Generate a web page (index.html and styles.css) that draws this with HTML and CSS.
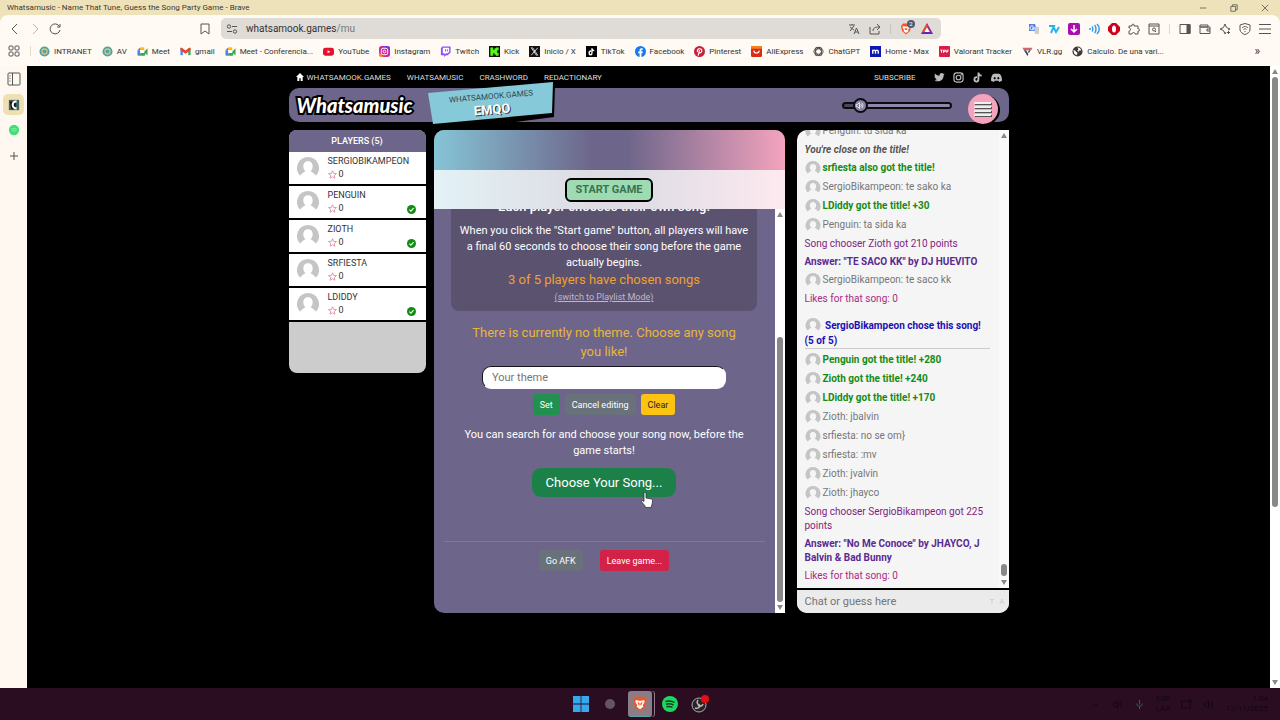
FILE: index.html
```html
<!DOCTYPE html>
<html lang="en">
<head>
    <meta charset="UTF-8">
    <meta name="viewport" content="width=device-width, initial-scale=1.0">
    <title>Whatsamusic - Name That Tune, Guess the Song Party Game</title>
    <link rel="stylesheet" href="styles.css">
</head>
<body>

    <!-- Shared icons -->
    <svg class="sprite" aria-hidden="true">
        <symbol id="avatar" viewBox="1 1 22 22">
            <path fill="#c5c5c5" d="M12 1a11 11 0 0 1 8 18.5l-1.500-1.200c-1-1.500-2.500-2.300-4-3 3-2 3.500-10-2.500-10s-5.500 8-2.500 10c-1.500.7-3 1.500-4 3L4 19.500A11 11 0 0 1 12 1z"/>
        </symbol>
        <symbol id="star" viewBox="0 0 24 24">
            <path fill="none" stroke="#d8799a" stroke-width="2" stroke-linejoin="round" d="M12 2l3 7 7.500.600-5.700 5 1.700 7.400-6.500-4-6.500 4 1.700-7.400-5.700-5L9 9z"/>
        </symbol>
        <symbol id="check" viewBox="0 0 24 24">
            <circle cx="12" cy="12" r="12" fill="#148c14"/>
            <path fill="none" stroke="#fff" stroke-width="3" d="M6.500 12.500l4 4 7-8"/>
        </symbol>
        <symbol id="globe" viewBox="0 0 24 24">
            <circle cx="12" cy="12" r="11" fill="#4fa3a8"/>
            <circle cx="12" cy="12" r="7" fill="#d5c27c"/>
            <circle cx="12" cy="12" r="4" fill="#4fa3a8"/>
        </symbol>
        <symbol id="meet" viewBox="0 0 24 24">
            <path fill="#fbbc04" d="M7 3h9v6H7z"/>
            <path fill="#ea4335" d="M7 3v6H1z"/>
            <path fill="#4285f4" d="M1 9h6v12H3c-1 0-2-1-2-2z"/>
            <path fill="#34a853" d="M7 15h9v-3l7-7v15l-5-4v3c0 1-1 2-2 2H7z"/>
            <path fill="#fff" d="M7 9h7v6H7z"/>
        </symbol>
        <symbol id="speaker" viewBox="0 0 24 24">
            <path fill="none" stroke="currentColor" stroke-width="2" d="M3 9v6h4l5 5V4L7 9zM15 8c2 2 2 6 0 8M18 5c4 4 4 10 0 14"/>
        </symbol>
    </svg>

    <!-- Browser window -->
    <header class="browser">
        <div class="title-bar">
            <span>Whatsamusic - Name That Tune, Guess the Song Party Game - Brave</span>
            <div class="window-buttons">
                <svg viewBox="0 0 10 10"><path d="M1 5h8"/></svg>
                <svg viewBox="0 0 10 10"><path d="M1 3h6v6H1zM3 3V1h6v6H7"/></svg>
                <svg viewBox="0 0 10 10"><path d="M1 1l8 8M9 1L1 9"/></svg>
            </div>
        </div>

        <div class="toolbar">
            <div class="nav-buttons">
                <svg viewBox="0 0 12 12"><path d="M8 1L3 6l5 5"/></svg>
                <svg class="faded" viewBox="0 0 12 12"><path d="M4 1l5 5-5 5"/></svg>
                <svg viewBox="0 0 12 12"><path d="M10.500 3.500A5 5 0 1 0 11 7M11 1v3H8"/></svg>
            </div>
            <svg class="bookmark-icon" viewBox="0 0 12 12"><path d="M2 1h8v10L6 8l-4 3z"/></svg>
            <div class="address-bar">
                <svg viewBox="0 0 12 12"><circle cx="3" cy="3.500" r="1.700"/><circle cx="9" cy="8.500" r="1.700"/><path d="M6 3.500h5M1 8.500h5"/></svg>
                <span class="url">whatsamook.games<span class="path">/mu</span></span>
                <div class="address-icons">
                    <svg viewBox="0 0 12 12"><path d="M1 2h6M4 1v1M2 8l4-5M2 4l4 3M6 11l2.500-6L11 11M7 9h3"/></svg>
                    <svg viewBox="0 0 12 12"><path d="M1 4v7h9V8M4 8c0-3 2-4 6-4M8 1l3 3-3 3"/></svg>
                    <span class="separator"></span>
                    <span class="shield">
                        <svg viewBox="0 0 24 24"><path fill="#f1562b" stroke="none" d="M6 1h12l4 5-2 10-8 7-8-7L2 6z"/><path fill="#fff" stroke="none" d="M6 6l4 1h4l4-1 1 3-3 5 1 2-5 4-5-4 1-2-3-5z"/><path fill="#f1562b" stroke="none" d="M9 10l3 1 3-1-1 4h-4z"/></svg>
                        <span class="badge">2</span>
                    </span>
                    <svg viewBox="0 0 12 12"><path fill="#fff" stroke="#a12386" stroke-width="2" d="M6 2L1.500 10h9z"/><path stroke="#f4511e" stroke-width="2" d="M6 2L1.500 10"/><path stroke="#5b2bbd" stroke-width="2" d="M1.500 10h9"/></svg>
                </div>
            </div>
            <div class="extensions">
                <svg viewBox="0 0 12 12"><path fill="#4b80e8" stroke="none" d="M1 1h6l2 7H1z"/><path fill="#c9ccd3" stroke="none" d="M6 4h5v7H7z"/><path stroke="#fff" d="M5.500 3.500A2 2 0 1 0 6 5H4"/></svg>
                <svg viewBox="0 0 12 12"><path stroke="#28b4ea" stroke-width="2" d="M1 3h5l-3 7M6 5l2 4 3-5"/></svg>
                <svg viewBox="0 0 12 12"><rect x="0" y="0" width="12" height="12" rx="2" fill="#a80fae" stroke="none"/><path stroke="#fff" stroke-width="1.500" d="M6 2v7M3 6l3 3 3-3"/></svg>
                <svg viewBox="0 0 12 12"><path stroke="#3a9be8" stroke-width="1.500" d="M2 5v2M4 3.500c1 1 1 4 0 5M6.500 2c2 2 2 6 0 8M9 1c3 3 3 7 0 10"/></svg>
                <svg viewBox="0 0 12 12"><path fill="#d1001c" stroke="none" d="M4 0h4l4 4v4l-4 4H4L0 8V4z"/><ellipse cx="6" cy="6" rx="2" ry="3.500" fill="#fff" stroke="none"/></svg>
                <svg viewBox="0 0 12 12"><path d="M1 3h3c-1-2.500 3-2.500 2 0h4v3c2-1 2 3 0 2v3H7c0-2-3-2-3 0H1V8c2 0 2-3 0-3z"/></svg>
                <svg viewBox="0 0 12 12"><path d="M1 1h10v10H1zM1 3h10"/><circle cx="6" cy="6.500" r="1.500"/><path d="M7 8l1 1"/></svg>
                <span class="separator"></span>
                <svg viewBox="0 0 12 12"><path d="M1 1.500h10v9H1z"/><path fill="#555" d="M8 1.500h3v9H8z"/></svg>
                <svg viewBox="0 0 12 12"><path d="M1 2h8v2H1zM1 3v7.500h10V4H2M11 6H8v2h3"/></svg>
                <svg viewBox="0 0 12 12"><path d="M6 1l1.500 3.500L11 6 9 7M6 1L4.500 4.500 1 6l3.500 1.500L6 11l1-2M9.500 8v3M8 9.500h3"/></svg>
                <svg viewBox="0 0 12 12"><path d="M6 .500l5 1.500v5c0 2-3 4-5 4.500-2-.5-5-2.500-5-4.500V2zM3 5c2-2 4-2 6 0M4.500 6.500c1-1 2-1 3 0M6 8v1"/></svg>
                <svg viewBox="0 0 12 12"><path d="M0 1.500h12M0 6h12M0 10.500h12"/></svg>
            </div>
        </div>

        <nav class="bookmarks">
            <svg class="apps" viewBox="0 0 12 12"><rect x="1" y="1" width="4" height="4" rx="1"/><rect x="7" y="1" width="4" height="4" rx="1"/><rect x="1" y="7" width="4" height="4" rx="1"/><rect x="7" y="7" width="4" height="4" rx="1"/></svg>
            <span class="separator"></span>
            <a href="#"><svg><use href="#globe"/></svg>INTRANET</a>
            <a href="#"><svg><use href="#globe"/></svg>AV</a>
            <a href="#"><svg><use href="#meet"/></svg>Meet</a>
            <a href="#"><svg viewBox="0 0 24 24"><path fill="#4285f4" d="M1 5h5v15H1z"/><path fill="#34a853" d="M18 5h5v15h-5z"/><path fill="#ea4335" d="M1 4h3l8 6 8-6h3v5l-11 8L1 9z"/></svg>gmail</a>
            <a href="#"><svg><use href="#meet"/></svg>Meet - Conferencia...</a>
            <a href="#"><svg viewBox="0 0 24 24"><rect y="4" width="24" height="17" rx="5" fill="#e8112d"/><path fill="#fff" d="M10 9l6 3.500-6 3.500z"/></svg>YouTube</a>
            <a href="#"><svg viewBox="0 0 24 24"><rect width="24" height="24" rx="6" fill="#d6249f"/><path fill="#fd8d32" d="M0 14l10 10H6c-4 0-6-2-6-6z"/><path fill="#7a3bdc" d="M10 0h8c4 0 6 2 6 6v6z"/><rect x="5" y="5" width="14" height="14" rx="4" fill="none" stroke="#fff" stroke-width="2"/><circle cx="12" cy="12" r="3" fill="none" stroke="#fff" stroke-width="2"/></svg>Instagram</a>
            <a href="#"><svg viewBox="0 0 24 24"><path fill="#9146ff" d="M5 1h18v13l-6 6h-4l-4 4v-4H2V5z"/><path fill="#fff" d="M6 4h14v9l-3 3h-4l-3 3v-3H6z"/><path stroke="#9146ff" stroke-width="2" d="M12 7v5M16 7v5"/></svg>Twitch</a>
            <a href="#"><svg viewBox="0 0 24 24"><path fill="#111" d="M0 0h24v24H0z"/><path fill="#53fc18" d="M3 3h6v5h3V5h3V3h6v6h-3v6h3v6h-6v-2h-3v-3H9v5H3z"/></svg>Kick</a>
            <a href="#"><svg viewBox="0 0 24 24"><path fill="#111" d="M0 0h24v24H0z"/><path fill="none" stroke="#ddd" stroke-width="2" d="M5 4h3l11 16h-3zM19 4L5 20"/></svg>Inicio / X</a>
            <a href="#"><svg viewBox="0 0 24 24"><path fill="#000" d="M0 0h24v24H0z"/><path fill="none" stroke="#fff" stroke-width="3" d="M11 11c-6 0-5 8-1 8 2 0 3-2 3-4V5c0 3 2 5 5 5"/></svg>TikTok</a>
            <a href="#"><svg viewBox="0 0 24 24"><circle cx="12" cy="12" r="12" fill="#1877f2"/><path fill="#fff" d="M10 24v-8H7v-4h3V9c0-3 2-5 7-4v3c-3 0-3 0-3 4h3l-.5 4H14v8z"/></svg>Facebook</a>
            <a href="#"><svg viewBox="0 0 24 24"><circle cx="12" cy="12" r="12" fill="#cb1f3c"/><path fill="none" stroke="#fff" stroke-width="2.500" d="M8 13c-4-7 9-10 9-3 0 6-5 6-6 3M12 9L9 21"/></svg>Pinterest</a>
            <a href="#"><svg viewBox="0 0 24 24"><rect width="24" height="24" rx="3" fill="#dc2b14"/><path fill="#f58220" d="M0 3c0-2 1-3 3-3h18c2 0 3 1 3 3v3H0z"/><path fill="none" stroke="#fff" stroke-width="2.500" d="M6 10c1 7 11 7 12 0"/></svg>AliExpress</a>
            <a href="#"><svg viewBox="0 0 24 24"><g fill="none" stroke="#444" stroke-width="2"><ellipse cx="12" cy="12" rx="10" ry="6"/><ellipse cx="12" cy="12" rx="10" ry="6" transform="rotate(60 12 12)"/><ellipse cx="12" cy="12" rx="10" ry="6" transform="rotate(120 12 12)"/></g></svg>ChatGPT</a>
            <a href="#"><svg viewBox="0 0 24 24"><path fill="#0b16b5" d="M0 0h24v24H0z"/><path fill="none" stroke="#fff" stroke-width="3" d="M6 17V8M6 12c0-4 6-4 6 0v5M12 12c0-4 6-4 6 0v5"/></svg>Home • Max</a>
            <a href="#"><svg viewBox="0 0 24 24"><rect width="24" height="24" rx="2" fill="#d51f4a"/><path fill="none" stroke="#fff" stroke-width="2" d="M3 9h5M5.500 9v6M10 15V9h4v3h-4M17 15V9h4M17 12h3"/></svg>Valorant Tracker</a>
            <a href="#"><svg viewBox="0 0 24 24"><path fill="#da626c" d="M1 4h22l-3 5H4z"/><path fill="#3a4a63" d="M4 9l8 13 2-4-5-9zM15 9l-2 4 2 2 4-6z"/></svg>VLR.gg</a>
            <a href="#"><svg viewBox="0 0 24 24"><circle cx="12" cy="12" r="11" fill="#3c3c3c"/><path fill="#fffaf3" d="M3 9c3 0 6 1 6 4 4 0 3 4 1 7l-5-3zM12 3c5 0 8 3 8 7h-4l-2 3-2-3 2-3z"/></svg>Calculo. De una vari...</a>
            <span class="more">»</span>
        </nav>
    </header>

    <div class="workspace">
        <!-- Vertical tabs -->
        <aside class="tab-strip">
            <svg viewBox="0 0 14 14"><rect x="1" y="1" width="12" height="12" rx="1"/><path d="M5.500 1v12M2.500 4h1M2.500 6.500h1M2.500 9h1"/></svg>
            <span class="tab active"><svg viewBox="0 0 14 14"><path fill="#3b655c" stroke="none" d="M1 1h12v12H1z"/><path fill="#111" stroke="none" d="M2 3h7v9H4z"/><path stroke="#fff" stroke-width="2.500" d="M10 3c-6-1-6 8 0 8"/></svg></span>
            <span class="tab"><svg viewBox="0 0 14 14"><circle cx="7" cy="7" r="6" fill="#42df78" stroke="none"/><path stroke="#8df0ae" d="M4 5.500h6M4 8h6"/></svg></span>
            <svg class="new-tab" viewBox="0 0 14 14"><path d="M7 3v8M3 7h8"/></svg>
        </aside>

        <!-- Game page -->
        <main class="page">
            <div class="container">
                <nav class="site-nav">
                    <a href="#"><svg viewBox="0 0 12 12"><path fill="#fff" d="M6 0l6 6h-2v6H7V8H5v4H2V6H0z"/></svg>WHATSAMOOK.GAMES</a>
                    <a href="#">WHATSAMUSIC</a>
                    <a href="#">CRASHWORD</a>
                    <a href="#">REDACTIONARY</a>
                    <a class="subscribe" href="#">SUBSCRIBE</a>
                    <div class="social">
                        <a href="#" aria-label="Twitter"><svg viewBox="0 0 24 24"><path fill="#bbb" d="M23 5l-2 2c0 10-8 16-20 12 3 0 5-1 6-2-2 0-4-1-4-3h2c-3-1-4-3-4-5l2 .500C1 8 1 5 2 3c3 3 6 5 10 5 0-6 5-7 8-4l3-1-2 3z"/></svg></a>
                        <a href="#" aria-label="Instagram"><svg viewBox="0 0 24 24"><g fill="none" stroke="#bbb" stroke-width="2.500"><rect x="2" y="2" width="20" height="20" rx="6"/><circle cx="12" cy="12" r="5"/></g><circle cx="18" cy="6" r="1.500" fill="#bbb"/></svg></a>
                        <a href="#" aria-label="TikTok"><svg viewBox="0 0 24 24"><path fill="none" stroke="#bbb" stroke-width="4" d="M11 11c-8 0-7 10-1 10 3 0 4-2 4-5V1c0 5 3 7 7 7"/></svg></a>
                        <a href="#" aria-label="Discord"><svg viewBox="0 0 24 24"><path fill="#bbb" fill-rule="evenodd" d="M4 5l5-2 1 1h4l1-1 5 2c3 4 4 9 4 14l-6 3-2-3H8l-2 3-6-3C0 14 1 9 4 5zM8 11a2.300 2.500 0 1 0 .1 0zM16 11a2.300 2.500 0 1 0 .1 0z"/></svg></a>
                    </div>
                </nav>

                <div class="banner">
                    <span class="logo">Whatsamusic</span>
                    <div class="room">
                        <svg viewBox="0 0 130 46" aria-hidden="true"><path fill="#000" d="M4 14l123-11-1 32-54 7-66 2z"/><path fill="#86c9d8" d="M0 11L125 0l-1 31L5 42z"/></svg>
                        <div class="room-text">
                            <span>WHATSAMOOK.GAMES</span>
                            <strong>EMQO</strong>
                        </div>
                    </div>
                    <div class="volume">
                        <input type="range" min="0" max="100" value="10" aria-label="Volume">
                        <svg><use href="#speaker"/></svg>
                    </div>
                    <button class="menu-button" type="button" aria-label="Menu"><i></i><i></i><i></i><i></i></button>
                </div>

                <div class="columns">
                    <!-- Players -->
                    <section class="players">
                        <h2>PLAYERS (5)</h2>
                        <ul>
                            <li><svg class="face"><use href="#avatar"/></svg><div><span>SERGIOBIKAMPEON</span><span class="score"><svg><use href="#star"/></svg>0</span></div></li>
                            <li><svg class="face"><use href="#avatar"/></svg><div><span>PENGUIN</span><span class="score"><svg><use href="#star"/></svg>0</span></div><svg class="ready"><use href="#check"/></svg></li>
                            <li><svg class="face"><use href="#avatar"/></svg><div><span>ZIOTH</span><span class="score"><svg><use href="#star"/></svg>0</span></div><svg class="ready"><use href="#check"/></svg></li>
                            <li><svg class="face"><use href="#avatar"/></svg><div><span>SRFIESTA</span><span class="score"><svg><use href="#star"/></svg>0</span></div></li>
                            <li><svg class="face"><use href="#avatar"/></svg><div><span>LDIDDY</span><span class="score"><svg><use href="#star"/></svg>0</span></div><svg class="ready"><use href="#check"/></svg></li>
                        </ul>
                    </section>

                    <!-- Game -->
                    <section class="game">
                        <div class="game-top">
                            <div class="start-bar">
                                <button class="start-button" type="button">START GAME</button>
                            </div>
                        </div>
                        <div class="game-body">
                            <div class="game-content">
                                <div class="mode-box">
                                    <h3>Each player chooses their own song!</h3>
                                    <p>When you click the "Start game" button, all players will have a final 60 seconds to choose their song before the game actually begins.</p>
                                    <p class="chosen">3 of 5 players have chosen songs</p>
                                    <a href="#">(switch to Playlist Mode)</a>
                                </div>
                                <label class="theme" for="theme">There is currently no theme. Choose any song you like!</label>
                                <input class="theme-input" id="theme" type="text" placeholder="Your theme">
                                <div class="theme-buttons">
                                    <button class="small-button green" type="button">Set</button>
                                    <button class="small-button gray" type="button">Cancel editing</button>
                                    <button class="small-button yellow" type="button">Clear</button>
                                </div>
                                <p class="search-text">You can search for and choose your song now, before the game starts!</p>
                                <div class="choose">
                                    <button class="choose-button" type="button">Choose Your Song...</button>
                                    <svg class="pointer" viewBox="0 0 12 17"><path fill="#fff" stroke="#222" stroke-width=".7" d="M3 1.500c0-1.500 2-1.500 2 0V6l5.500 1c1 .3 1 1 1 2 0 3-1 4-1.500 6.500H4.500C4 13 2 11.500.7 10 0 9 1.500 8 3 9.500z"/></svg>
                                </div>
                                <div class="leave-buttons">
                                    <button class="small-button gray" type="button">Go AFK</button>
                                    <button class="small-button red" type="button">Leave game...</button>
                                </div>
                            </div>
                            <div class="scrollbar"><i class="up"></i><i class="thumb"></i><i class="down"></i></div>
                        </div>
                    </section>

                    <!-- Chat -->
                    <section class="chat">
                        <div class="chat-body">
                            <div class="messages">
                                <p><svg><use href="#avatar"/></svg>Penguin: tu sida ka</p>
                                <p class="close">You're close on the title!</p>
                                <p class="got"><svg><use href="#avatar"/></svg>srfiesta also got the title!</p>
                                <p><svg><use href="#avatar"/></svg>SergioBikampeon: te sako ka</p>
                                <p class="got"><svg><use href="#avatar"/></svg>LDiddy got the title! +30</p>
                                <p><svg><use href="#avatar"/></svg>Penguin: ta sida ka</p>
                                <p class="points">Song chooser Zioth got 210 points</p>
                                <p class="answer">Answer: "TE SACO KK" by DJ HUEVITO</p>
                                <p><svg><use href="#avatar"/></svg>SergioBikampeon: te saco kk</p>
                                <p class="likes">Likes for that song: 0</p>
                                <p class="round"><svg><use href="#avatar"/></svg> SergioBikampeon chose this song! (5 of 5)</p>
                                <p class="got"><svg><use href="#avatar"/></svg>Penguin got the title! +280</p>
                                <p class="got"><svg><use href="#avatar"/></svg>Zioth got the title! +240</p>
                                <p class="got"><svg><use href="#avatar"/></svg>LDiddy got the title! +170</p>
                                <p><svg><use href="#avatar"/></svg>Zioth: jbalvin</p>
                                <p><svg><use href="#avatar"/></svg>srfiesta: no se om}</p>
                                <p><svg><use href="#avatar"/></svg>srfiesta: :mv</p>
                                <p><svg><use href="#avatar"/></svg>Zioth: jvalvin</p>
                                <p><svg><use href="#avatar"/></svg>Zioth: jhayco</p>
                                <p class="points">Song chooser SergioBikampeon got 225 points</p>
                                <p class="answer">Answer: "No Me Conoce" by JHAYCO, J Balvin &amp; Bad Bunny</p>
                                <p class="likes">Likes for that song: 0</p>
                            </div>
                            <div class="scrollbar"><i class="up"></i><i class="thumb"></i><i class="down"></i></div>
                        </div>
                        <div class="chat-entry">
                            <input type="text" placeholder="Chat or guess here" aria-label="Chat or guess here">
                            <span>T</span><span>A</span>
                        </div>
                    </section>
                </div>
            </div>
        </main>
        <div class="scrollbar page-scroll"><i class="up"></i><i class="thumb"></i><i class="down"></i></div>
    </div>

    <!-- Taskbar -->
    <footer class="taskbar">
        <div class="apps-row">
            <svg viewBox="0 0 16 16"><path fill="#35a8ee" d="M0 0h7.600v7.600H0zM8.400 0H16v7.600H8.400zM0 8.400h7.600V16H0zM8.400 8.400H16V16H8.400z"/></svg>
            <svg viewBox="0 0 16 16"><circle cx="8" cy="8" r="5" fill="#66545f"/></svg>
            <span class="running"><svg viewBox="0 0 24 24"><path fill="#f1562b" d="M6 1h12l4 5-2 10-8 7-8-7L2 6z"/><path fill="#fff" d="M6 6l4 1h4l4-1 1 3-3 5 1 2-5 4-5-4 1-2-3-5z"/><path fill="#f1562b" d="M8 9l3 1 1 5 1-5 3-1-2 5h-4z"/></svg></span>
            <svg viewBox="0 0 16 16"><circle cx="8" cy="8" r="8" fill="#1ed760"/><path fill="none" stroke="#143d22" stroke-width="1.500" d="M3.500 5.500c3-1 6-.8 9 .8M4 8.200c3-.8 5-.5 7.500.8M4.500 10.800c2-.6 4-.4 6 .6"/></svg>
            <svg class="obs" viewBox="0 0 18 18"><circle cx="8" cy="10" r="7" fill="#2a2226" stroke="#aaa"/><path fill="none" stroke="#bbb" stroke-width="1.500" d="M7 5c-2 3 0 5 2 5M12 9c-1 3-4 3-5 1M4 13c3 1 5-1 5-3"/><circle cx="14" cy="4" r="4" fill="#e80d14"/></svg>
        </div>
        <div class="tray">
            <svg viewBox="0 0 12 12"><path d="M3 8l3-3 3 3"/></svg>
            <svg><use href="#speaker"/></svg>
            <svg class="mic" viewBox="0 0 12 12"><path d="M6 1v5M3 5c0 4 6 4 6 0M6 8v3"/></svg>
            <span>ESP<br>LAA</span>
            <svg viewBox="0 0 12 12"><path d="M1 2h6M1 2v8h9V6M8 1h3v3H8z"/></svg>
            <svg><use href="#speaker"/></svg>
            <span class="clock">1:04<br>12/11/2025</span>
        </div>
    </footer>

</body>
</html>
```

FILE: styles.css
```css
/* Basic Reset */
* {
    margin: 0;
    padding: 0;
    box-sizing: border-box;
}

body {
    display: flex;
    flex-direction: column;
    min-height: 100vh;
    font-family: "Roboto", sans-serif;
    font-size: 8px;
    color: #333;
    background: #000;
    overflow: hidden;
}

a {
    color: inherit;
    text-decoration: none;
}

ul {
    list-style: none;
}

svg {
    flex: none;
    width: 12px;
    height: 12px;
}

button,
input {
    font-family: inherit;
}

.sprite {
    position: absolute;
    width: 0;
    height: 0;
}

.separator {
    width: 1px;
    height: 10px;
    background: #d5d0c8;
}

/* Browser Styles */
.browser {
    background: #eee2bb;
}

.title-bar {
    display: flex;
    justify-content: space-between;
    align-items: center;
    height: 15px;
    padding: 0 11px 0 7px;
    color: #3d382a;
}

.window-buttons {
    display: flex;
    gap: 23px;
}

.window-buttons svg {
    width: 8px;
    height: 8px;
}

.window-buttons svg,
.toolbar svg,
.apps,
.tab-strip svg,
.tray svg {
    fill: none;
    stroke: #555;
}

.toolbar {
    display: flex;
    align-items: center;
    height: 27px;
    padding: 0 9px;
    background: #fffaf3;
    border-radius: 8px 8px 0 0;
}

.nav-buttons {
    display: flex;
    gap: 8px;
    margin-right: 138px;
}

.nav-buttons .faded {
    opacity: 0.4;
}

.address-bar {
    display: flex;
    align-items: center;
    flex: 0 1 720px;
    height: 21px;
    margin-left: 10px;
    padding: 0 8px 0 5px;
    background: #dfdbd7;
    border-radius: 5px;
}

.url {
    margin-left: 8px;
    font-size: 10px;
}

.url .path {
    color: #777;
}

.address-icons {
    display: flex;
    align-items: center;
    gap: 9px;
    margin-left: auto;
}

.address-icons .separator {
    background: #c8c4bf;
}

.shield {
    position: relative;
    height: 12px;
}

.badge {
    position: absolute;
    top: -3px;
    left: 7px;
    width: 8px;
    height: 8px;
    border-radius: 50%;
    background: #4f5c70;
    color: #fff;
    font-size: 6px;
    line-height: 8px;
    text-align: center;
}

.extensions {
    display: flex;
    align-items: center;
    gap: 8px;
    margin-left: auto;
}

.extensions .separator {
    margin: 0 1px;
    background: #e5d9bf;
}

.bookmarks {
    display: flex;
    align-items: center;
    gap: 10px;
    height: 24px;
    padding: 0 20px 6px 8px;
    background: #fffaf3;
    white-space: nowrap;
}

.bookmarks a {
    display: flex;
    align-items: center;
    gap: 4px;
}

.bookmarks a svg {
    width: 11px;
    height: 11px;
}

.bookmarks .separator {
    margin-right: -2px;
    background: #e5dcc8;
}

.more {
    margin-left: auto;
    font-size: 12px;
}

/* Workspace */
.workspace {
    display: flex;
    flex: 1;
}

.tab-strip {
    display: flex;
    flex-direction: column;
    align-items: center;
    gap: 4px;
    width: 27px;
    padding-top: 6px;
    background: #fff8f0;
}

.tab-strip svg {
    width: 14px;
    height: 14px;
}

.tab {
    display: flex;
    align-items: center;
    justify-content: center;
    width: 21px;
    height: 21px;
    border-radius: 5px;
}

.tab-strip .tab svg {
    width: 12px;
    height: 12px;
}

.tab.active {
    margin-top: 4px;
    background: #efe0b4;
}

.new-tab {
    margin-top: 5px;
}

/* Scrollbars */
.scrollbar {
    display: flex;
    flex-direction: column;
    align-items: center;
    flex: none;
    width: 10px;
    padding: 3px 0;
    background: #fff;
}

.scrollbar .up,
.scrollbar .down {
    border: 3px solid transparent;
}

.scrollbar .up {
    border-top: 0;
    border-bottom: 5px solid #888;
}

.scrollbar .down {
    border-bottom: 0;
    border-top: 5px solid #888;
}

.scrollbar .thumb {
    width: 6px;
    border-radius: 3px;
    background: #888;
}

.page-scroll .thumb {
    height: 430px;
    margin: 3px 0 auto;
}

/* Page */
.page {
    flex: 1;
    background: #000;
}

.container {
    width: 100%;
    max-width: 720px;
    margin: 0 auto;
}

.site-nav {
    display: flex;
    align-items: center;
    gap: 16px;
    height: 22px;
    padding: 0 7px;
    color: #ddd;
}

.site-nav a {
    display: flex;
    align-items: center;
    gap: 3px;
}

.site-nav a svg {
    width: 8px;
    height: 8px;
}

.site-nav .subscribe {
    margin-left: auto;
}

.social {
    display: flex;
    gap: 8px;
    margin-left: 2px;
}

.site-nav .social svg {
    width: 11px;
    height: 11px;
}

.banner {
    position: relative;
    display: flex;
    align-items: center;
    height: 34px;
    padding: 0 11px 0 8px;
    background: #6d668a;
    border-radius: 10px;
}

.logo {
    color: #fff;
    font-family: "Lato", sans-serif;
    font-size: 20px;
    font-style: italic;
    font-weight: 900;
    -webkit-text-stroke: 4px #000;
    paint-order: stroke fill;
}

.room {
    position: absolute;
    top: -6px;
    left: 139px;
    width: 130px;
    height: 46px;
}

.room > svg {
    width: 130px;
    height: 46px;
}

.room-text {
    position: absolute;
    top: 8px;
    left: 0;
    width: 127px;
    color: #2f4651;
    font-size: 8px;
    line-height: 13px;
    text-align: center;
    transform: rotate(-5deg);
}

.room-text span,
.room-text strong {
    display: block;
}

.room-text strong {
    color: #fff;
    font-size: 13px;
    text-shadow: 1px 1px 0 #333;
}

.volume {
    position: relative;
    display: flex;
    align-items: center;
    width: 110px;
    height: 16px;
    margin-left: auto;
}

.volume input {
    width: 100%;
    height: 16px;
    appearance: none;
    background: none;
}

.volume input::-webkit-slider-runnable-track {
    height: 7px;
    border: 2px solid #0c0b12;
    border-radius: 4px;
    background: linear-gradient(90deg, #4b465f 14%, #8f88aa 14%);
}

.volume input::-webkit-slider-thumb {
    width: 15px;
    height: 15px;
    margin-top: -6px;
    appearance: none;
    border: 2px solid #0c0b12;
    border-radius: 50%;
    background: #8782a0;
}

.volume svg {
    position: absolute;
    left: 13px;
    width: 9px;
    height: 9px;
    color: #fff;
    pointer-events: none;
}

.menu-button {
    display: flex;
    flex-direction: column;
    align-items: center;
    justify-content: center;
    gap: 2px;
    width: 30px;
    height: 30px;
    margin: 8px 0 0 16px;
    border: 0;
    border-radius: 50%;
    background: #f5a3bd;
    box-shadow: 2px 1px 0 #000;
}

.menu-button i {
    width: 17px;
    height: 2px;
    background: #eee;
    box-shadow: 1px 1px 0 #555;
}

.columns {
    display: grid;
    grid-template-columns: 137px 1fr 212px;
    align-items: start;
    column-gap: 8px;
    margin-top: 8px;
}

/* Players Styles */
.players {
    height: 243px;
    overflow: hidden;
    background: #ccc;
    border-radius: 8px;
}

.players h2 {
    background: #6d668a;
    color: #fff;
    font-size: 9px;
    font-weight: 500;
    line-height: 22px;
    text-align: center;
}

.players li {
    display: flex;
    align-items: center;
    height: 34px;
    padding: 0 10px 0 8px;
    background: #fff;
    border-bottom: 2px solid #000;
    font-size: 9px;
    line-height: 13px;
}

.face {
    width: 22px;
    height: 22px;
    margin-right: 9px;
}

.score {
    display: flex;
    align-items: center;
    gap: 2px;
}

.score svg {
    width: 9px;
    height: 9px;
}

.ready {
    align-self: flex-end;
    width: 9px;
    height: 9px;
    margin: 0 0 4px auto;
}

/* Game Styles */
.game {
    display: flex;
    flex-direction: column;
    height: 483px;
    margin-right: 4px;
    overflow: hidden;
    background: #6d668a;
    border-radius: 10px 10px 0 10px;
}

.game-top {
    padding-top: 40px;
    background: linear-gradient(90deg, #86c5d6, #6d668a 45%, #6d668a 55%, #f4a3bd);
}

.start-bar {
    display: flex;
    justify-content: center;
    align-items: center;
    height: 39px;
    background: rgba(255, 255, 255, 0.77);
}

.start-button {
    height: 24px;
    padding: 0 8px;
    background: #9edbb2;
    border: 2px solid #000;
    border-radius: 6px;
    color: #3a7350;
    font-size: 11px;
    font-weight: 700;
}

.game-body {
    display: flex;
    flex: 1;
    min-height: 0;
}

.game-content {
    display: flex;
    flex: 1;
    flex-direction: column;
    align-items: center;
    justify-content: flex-end;
    overflow: hidden;
    padding: 0 10px 42px;
    color: #fff;
    font-size: 11px;
    line-height: 16px;
    text-align: center;
}

.game-content > * {
    flex: none;
}

.mode-box {
    width: 306px;
    margin-bottom: 12px;
    padding: 8px 8px 6px;
    background: #5b5270;
    border-radius: 8px;
}

.mode-box h3 {
    margin-bottom: 8px;
    font-size: 13px;
    font-weight: 500;
}

.mode-box .chosen {
    color: #f0a030;
    font-size: 13px;
    line-height: 18px;
}

.mode-box a {
    display: block;
    color: #bdb8ca;
    font-size: 9px;
    text-decoration: underline;
}

.theme {
    max-width: 280px;
    color: #e9b43c;
    font-size: 13px;
    line-height: 19px;
}

.theme-input {
    width: 244px;
    height: 23px;
    margin-top: 5px;
    padding: 0 9px;
    border: 1px solid #fff;
    border-top-color: #16141d;
    border-left-color: #16141d;
    border-radius: 9px;
    font-size: 11px;
}

.theme-input::placeholder,
.chat-entry input::placeholder {
    color: #757575;
}

.theme-buttons {
    display: flex;
    gap: 5px;
    margin: 5px 0 12px;
}

.small-button {
    height: 21px;
    padding: 0 7px;
    border: 0;
    border-radius: 3px;
    color: #fff;
    font-size: 9px;
}

.green {
    background: #22914f;
}

.gray {
    background: #69727b;
}

.yellow {
    background: #fbc412;
    color: #222;
}

.red {
    background: #d22247;
}

.search-text {
    max-width: 300px;
}

.choose {
    position: relative;
    display: flex;
    justify-content: center;
    width: 100%;
    margin-top: 9px;
    padding-bottom: 44px;
    border-bottom: 1px solid #807998;
}

.choose-button {
    height: 29px;
    padding: 0 14px;
    border: 0;
    border-radius: 9px;
    background: #1c8149;
    color: #fff;
    font-size: 13px;
}

.pointer {
    position: absolute;
    top: 24px;
    left: 197px;
    width: 12px;
    height: 17px;
}

.leave-buttons {
    display: flex;
    gap: 17px;
    margin-top: 8px;
}

.game .thumb {
    height: 265px;
    margin: auto 0 3px;
}

/* Chat Styles */
.chat {
    display: flex;
    flex-direction: column;
    height: 483px;
    overflow: hidden;
    background: #f5f5f5;
    border-radius: 10px 0 10px 10px;
}

.chat-body {
    display: flex;
    flex: 1;
    min-height: 0;
}

.messages {
    display: flex;
    flex: 1;
    flex-direction: column;
    justify-content: flex-end;
    overflow: hidden;
    padding: 0 9px 1px 8px;
    color: #777;
    font-size: 10px;
    line-height: 14px;
}

.messages p {
    flex: none;
    padding-bottom: 4px;
}

.messages p svg {
    width: 16px;
    height: 15px;
    margin-right: 2px;
    vertical-align: top;
}

.messages .close {
    color: #555;
    font-style: italic;
    font-weight: 700;
}

.messages .got {
    color: #148c14;
    font-weight: 700;
}

.messages .points {
    color: #7f1d7f;
}

.messages .answer {
    color: #5b2a91;
    font-weight: 700;
}

.messages .likes {
    color: #ab2a86;
}

.messages .round {
    margin: 8px 0 4px;
    padding-bottom: 0;
    border-bottom: 1px solid #ccc;
    color: #1a10b4;
    font-weight: 700;
    line-height: 15px;
}

.chat .scrollbar {
    background: #fafafa;
}

.chat .thumb {
    height: 12px;
    margin: auto 0 4px;
}

.chat-entry {
    display: flex;
    align-items: center;
    gap: 5px;
    height: 25px;
    padding: 0 4px 0 8px;
    background: #ebebeb;
    border-top: 2px solid #000;
    color: #ccc;
}

.chat-entry input {
    flex: 1;
    min-width: 0;
    border: 0;
    background: none;
    font-size: 11px;
}

/* Taskbar Styles */
.taskbar {
    display: grid;
    grid-template-columns: 1fr auto 1fr;
    align-items: center;
    height: 32px;
    padding: 0 12px 0 14px;
    background: #2b0d22;
}

.apps-row {
    display: flex;
    grid-column: 2;
    align-items: center;
    gap: 13px;
}

.apps-row svg {
    width: 16px;
    height: 16px;
}

.running {
    display: flex;
    align-items: center;
    justify-content: center;
    width: 24px;
    height: 26px;
    margin: 0 -3px;
    border-bottom: 1px solid #5ba3a8;
    border-radius: 3px;
    background: #8c7d85;
    box-shadow: 2px 0 0 #2b0d22, 3px 0 0 #8c7d85;
}

.apps-row .obs {
    width: 18px;
    height: 18px;
}

.tray {
    display: flex;
    align-items: center;
    justify-content: flex-end;
    gap: 11px;
    color: #14060f;
    line-height: 10px;
    text-align: right;
}

.tray svg {
    width: 11px;
    height: 11px;
    stroke: #14060f;
}

.tray .mic {
    stroke: #41606b;
}
```
